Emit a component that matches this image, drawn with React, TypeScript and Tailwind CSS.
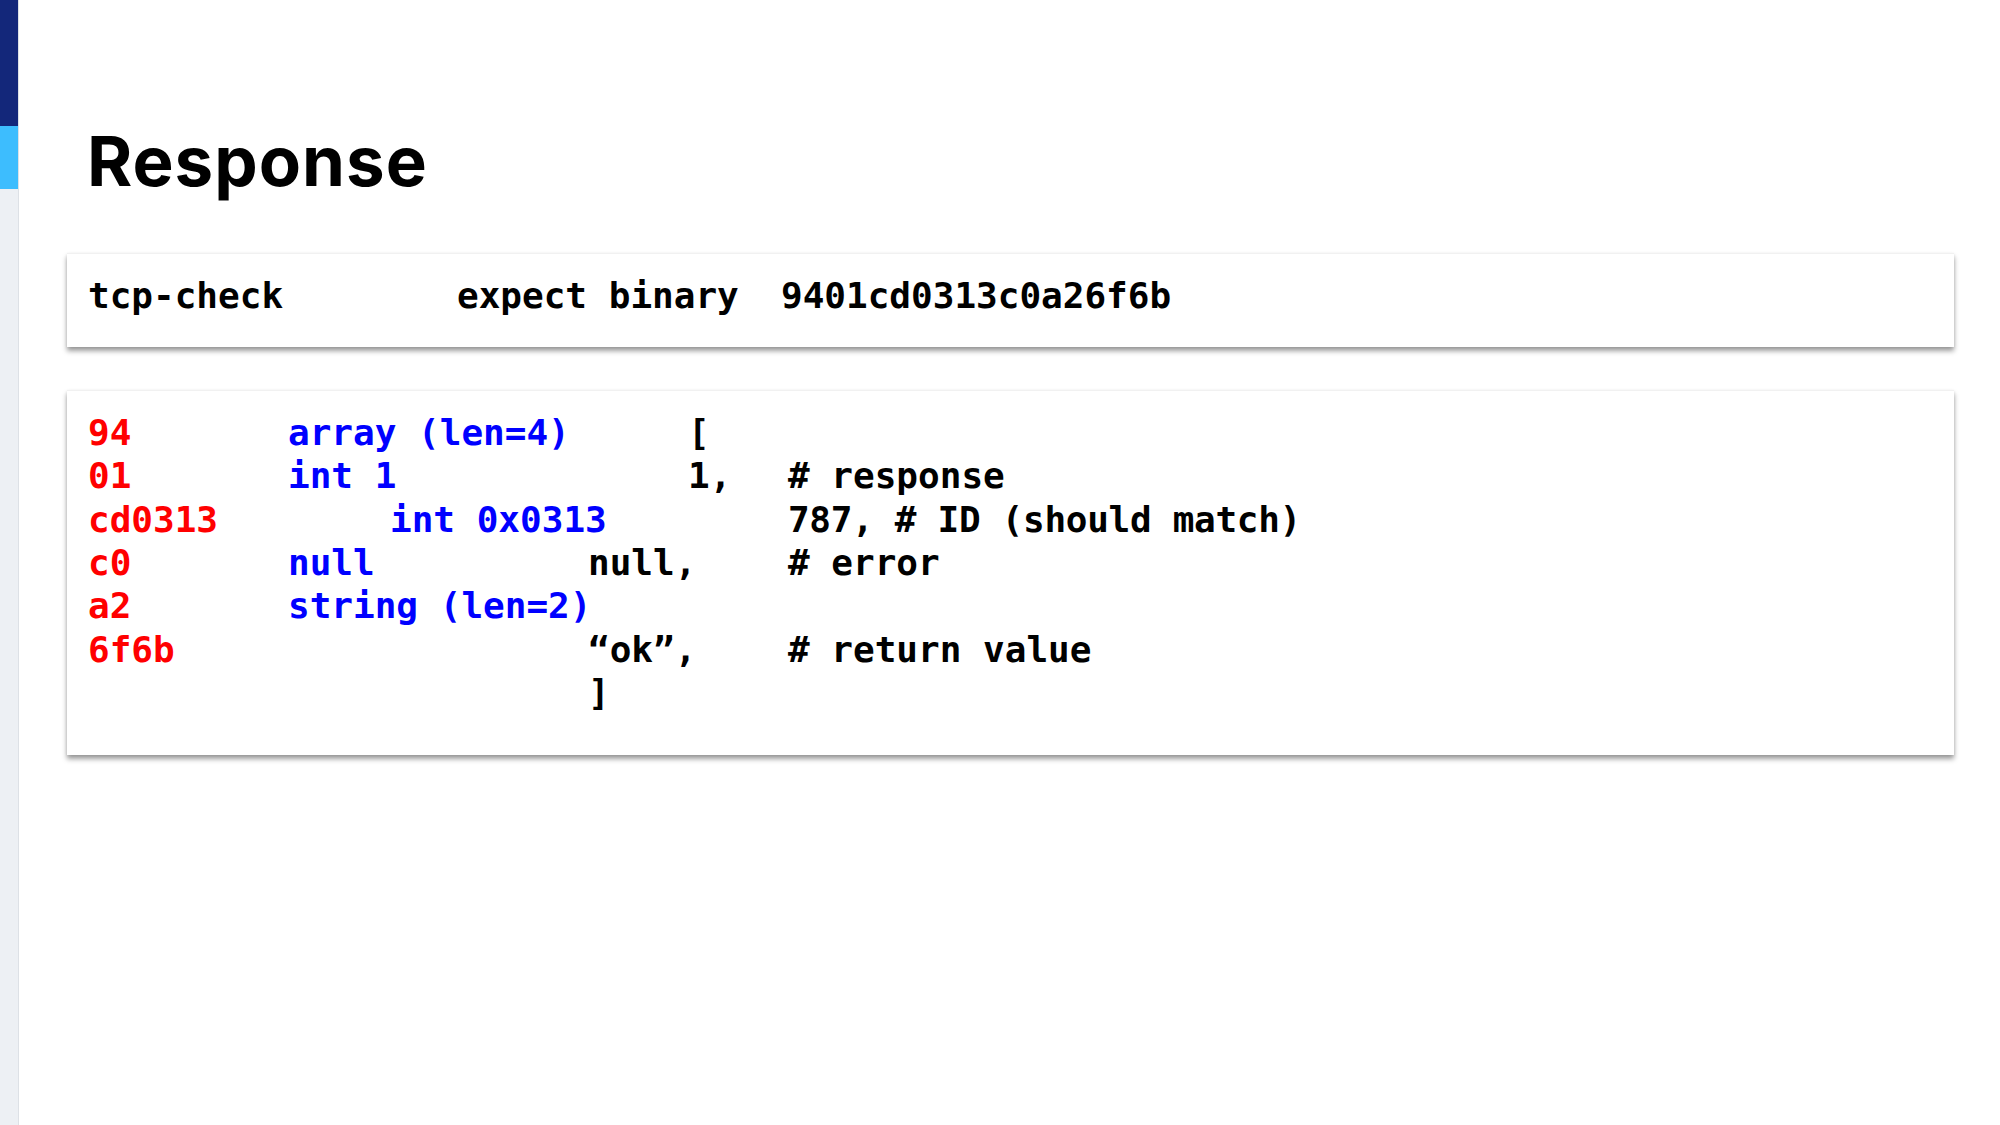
import React from "react";

const mono = "font-['DejaVu_Sans_Mono','Liberation_Mono',monospace] font-bold text-[36px]";

const Card = ({ className, children }: { className: string; children: React.ReactNode }) => (
  <div
    className={`bg-white border-t border-[#f1f1f1] shadow-[0_4px_5px_rgba(0,0,0,0.38),0_1px_3px_rgba(0,0,0,0.08)] ${className}`}
  >
    {children}
  </div>
);

const App = () => {
  return (
    <div className="flex min-h-[1125px] w-full bg-white">
      {/* side strip */}
      <div className="flex w-[19px] shrink-0 flex-col border-r border-[#dde1e6] bg-[#edf0f4]">
        <div className="h-[126px] bg-[#13277a]"></div>
        <div className="h-[63px] bg-[#3dbdfe]"></div>
      </div>

      <div className="flex-1 pl-[48px] pr-[46px] pt-[127px]">
        <h1 className="pl-[20px] font-['Inter','Liberation_Sans',sans-serif] text-[69px] font-bold leading-none tracking-[1px] text-black">
          Response
        </h1>

        <Card className="mt-[57px] h-[94px] pl-[21px] pt-[20px]">
          <div className={`${mono} flex whitespace-pre leading-[44px] text-black`}>
            <span className="w-[369px] shrink-0">tcp-check</span>
            <span className="w-[324px] shrink-0">expect binary</span>
            <span>9401cd0313c0a26f6b</span>
          </div>
        </Card>

        <Card className="mt-[43px] h-[365px] pl-[21px] pt-[20px]">
          <div className={`${mono} whitespace-pre leading-[43.33px] text-black`}>
            <div className="flex">
              <span className="w-[200px] shrink-0 text-[#ff0000]">94</span>
              <span className="w-[400px] shrink-0 text-[#0000ff]">array (len=4)</span>
              <span>[</span>
            </div>
            <div className="flex">
              <span className="w-[200px] shrink-0 text-[#ff0000]">01</span>
              <span className="w-[400px] shrink-0 text-[#0000ff]">int 1</span>
              <span className="w-[100px] shrink-0">1,</span>
              <span># response</span>
            </div>
            <div className="flex">
              <span className="w-[302px] shrink-0 text-[#ff0000]">cd0313</span>
              <span className="w-[398px] shrink-0 text-[#0000ff]">int 0x0313</span>
              <span className="tracking-[-0.3px]">787, # ID (should match)</span>
            </div>
            <div className="flex">
              <span className="w-[200px] shrink-0 text-[#ff0000]">c0</span>
              <span className="w-[300px] shrink-0 text-[#0000ff]">null</span>
              <span className="w-[200px] shrink-0">null,</span>
              <span># error</span>
            </div>
            <div className="flex">
              <span className="w-[200px] shrink-0 text-[#ff0000]">a2</span>
              <span className="text-[#0000ff]">string (len=2)</span>
            </div>
            <div className="flex">
              <span className="w-[500px] shrink-0 text-[#ff0000]">6f6b</span>
              <span className="w-[200px] shrink-0">“ok”,</span>
              <span># return value</span>
            </div>
            <div className="flex">
              <span className="w-[500px] shrink-0"></span>
              <span>]</span>
            </div>
          </div>
        </Card>
      </div>
    </div>
  );
};

export default App;
